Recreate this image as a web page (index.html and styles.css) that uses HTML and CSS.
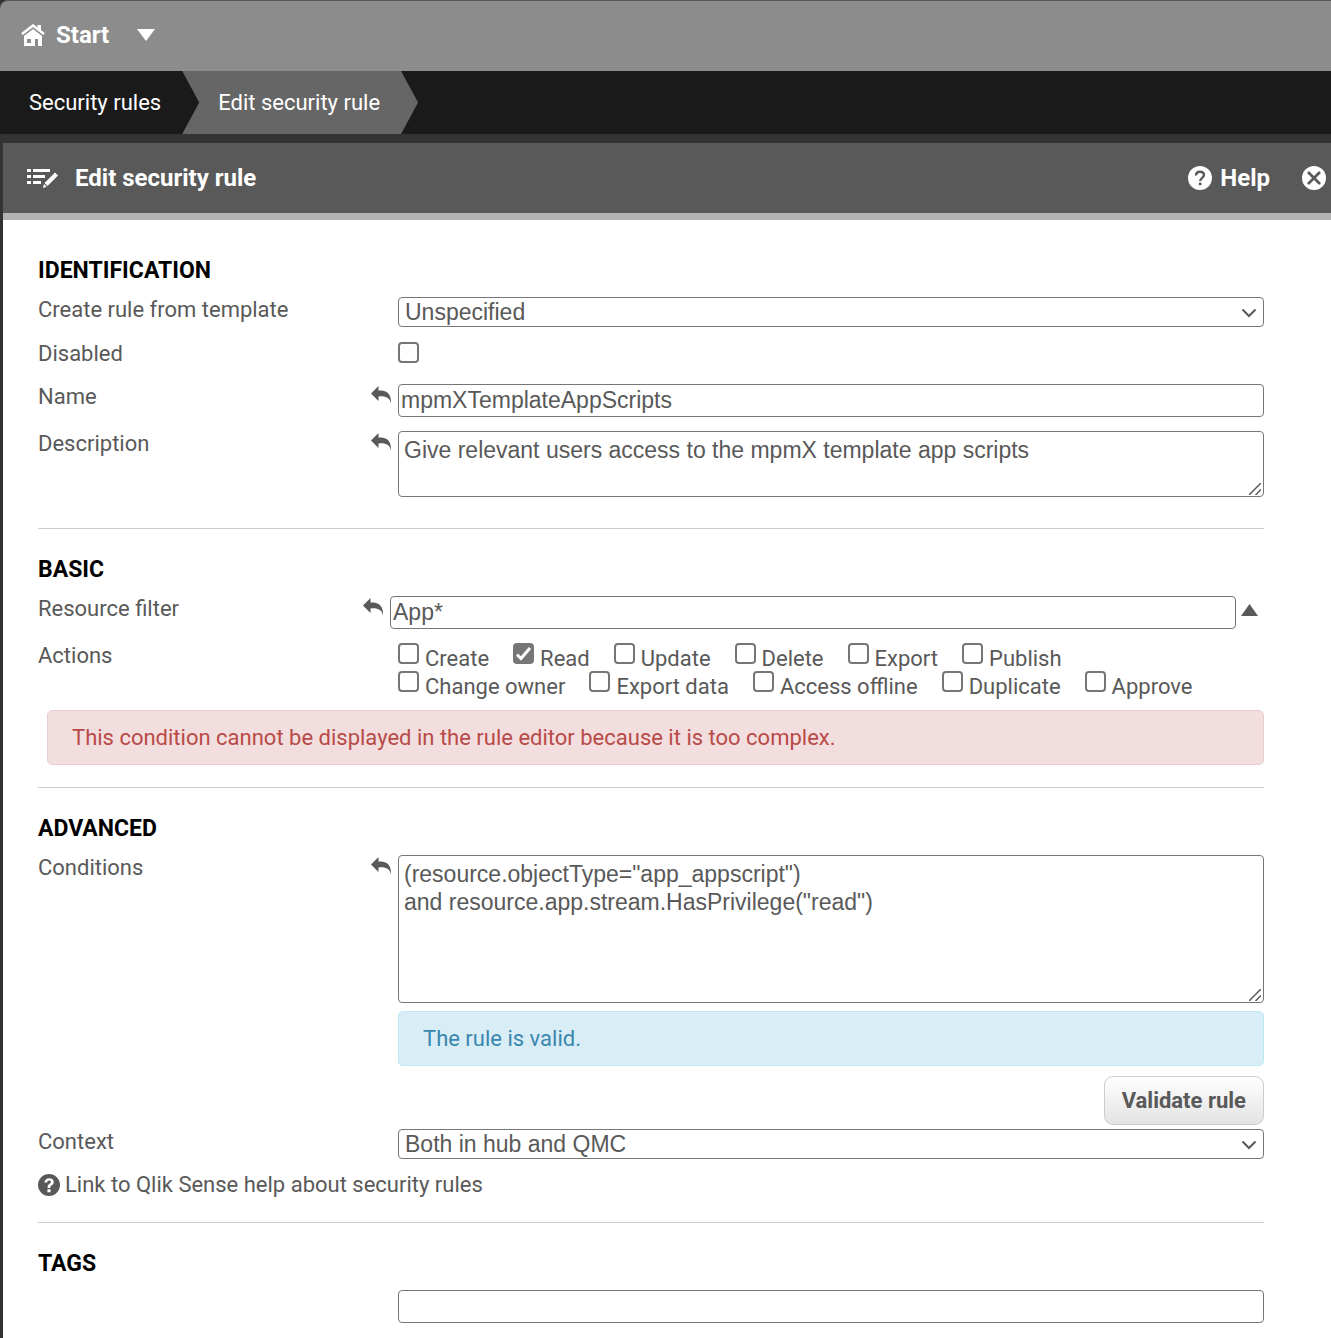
FILE: index.html
```html
<!DOCTYPE html>
<html lang="en">
<head>
  <meta charset="UTF-8">
  <meta name="viewport" content="width=device-width, initial-scale=1.0">
  <title>Edit security rule</title>
  <link rel="stylesheet" href="styles.css">
</head>
<body>
  <!-- shared icons -->
  <svg class="sprite" aria-hidden="true">
    <symbol id="undo" viewBox="0 0 20 18">
      <path d="M0 7.500 7.500 0v4.500C14 4.200 20.500 6 20 17.500 18.800 12 15 9.800 7.500 10.500V15z"/>
    </symbol>
    <symbol id="chevron" viewBox="0 0 16 10">
      <path d="M1.500 1.500 8 8l6.500-6.500" fill="none" stroke="currentColor" stroke-width="2"/>
    </symbol>
    <symbol id="grip" viewBox="0 0 12 12">
      <path d="M0 12 12 0M6.500 12 12 6.500" fill="none" stroke="currentColor" stroke-width="1.500"/>
    </symbol>
    <symbol id="help" viewBox="0 0 24 24">
      <path fill-rule="evenodd" d="M12 0a12 12 0 1 0 0 24 12 12 0 0 0 0-24zM7 9.300C7.200 6.300 9.200 4.500 12.200 4.500c3 0 5 1.700 5 4.100 0 1.700-.8 2.700-2.200 3.700-1.200.8-1.500 1.300-1.500 2.500v.4h-3v-.7c0-1.800.6-2.800 2-3.800 1.200-.8 1.500-1.200 1.500-2 0-1-.7-1.600-1.900-1.600-1.300 0-2 .8-2.100 2.200zM10.300 16.500h3.400v3.300h-3.400z"/>
    </symbol>
  </svg>

  <header class="topbar">
    <a class="start" href="#">
      <svg class="home-icon" viewBox="0 0 24 23" aria-hidden="true">
        <path d="M1 10 12 1.500 23 10" fill="none" stroke="#fff" stroke-width="2.500"/>
        <path d="M16.500 1H20v6.500l-3.500-3z" fill="#fff"/>
        <path fill="#fff" fill-rule="evenodd" d="M12 5 21 12v10H3V12zM6 15v4h4v-4zm8 0v7h3v-7z"/>
      </svg>
      <span>Start</span>
    </a>
    <button class="menu-btn" type="button" aria-label="Open menu">
      <svg viewBox="0 0 18 12" aria-hidden="true"><path d="M0 0h18L9 12z" fill="#fff"/></svg>
    </button>
  </header>

  <nav class="crumbs">
    <a class="crumb" href="#">Security rules</a>
    <a class="crumb active" href="#">Edit security rule</a>
  </nav>

  <main class="panel">
    <div class="panel-header">
      <svg class="edit-icon" viewBox="0 0 31 20" aria-hidden="true">
        <path fill="#fff" d="M0 1h4v3H0zM6 1h17v3H6zM0 7h4v3H0zM6 7h12v3H6zM0 13h4v3H0zM6 13h8v3H6zM28 4.500l3 3L20.500 18l-3-3zM17 16l2.700 2.700L16 20z"/>
      </svg>
      <h1>Edit security rule</h1>
      <a class="help" href="#">
        <svg viewBox="0 0 24 24" aria-hidden="true">
          <circle cx="12" cy="12" r="12" fill="#fff"/>
          <path d="M8 9.500C8 7 9.700 5.800 12 5.800s4 1.300 4 3.300c0 2.700-3.800 2.900-3.800 6" fill="none" stroke="#595959" stroke-width="2.400"/>
          <path d="M10.900 16.600h2.600v2.600h-2.600z" fill="#595959"/>
        </svg>
        Help
      </a>
      <button class="close" type="button" aria-label="Close">
        <svg viewBox="0 0 24 24" aria-hidden="true">
          <circle cx="12" cy="12" r="12" fill="#fff"/>
          <path d="m6 6 12 12m0-12L6 18" stroke="#595959" stroke-width="2.800"/>
        </svg>
      </button>
    </div>

    <form class="content">
      <section>
        <h2>IDENTIFICATION</h2>
        <div class="row">
          <label for="template">Create rule from template</label>
          <div class="field">
            <select id="template"><option>Unspecified</option></select>
            <svg class="chevron" aria-hidden="true"><use href="#chevron"/></svg>
          </div>
        </div>
        <div class="row">
          <label for="disabled">Disabled</label>
          <div class="field check-field"><input type="checkbox" id="disabled"></div>
        </div>
        <div class="row">
          <label for="name">Name</label>
          <button class="undo" type="button" aria-label="Undo name"><svg aria-hidden="true"><use href="#undo"/></svg></button>
          <div class="field"><input type="text" id="name" value="mpmXTemplateAppScripts"></div>
        </div>
        <div class="row">
          <label for="description">Description</label>
          <button class="undo" type="button" aria-label="Undo description"><svg aria-hidden="true"><use href="#undo"/></svg></button>
          <div class="field">
            <textarea id="description" rows="2">Give relevant users access to the mpmX template app scripts</textarea>
            <svg class="grip" aria-hidden="true"><use href="#grip"/></svg>
          </div>
        </div>
      </section>

      <section>
        <h2>BASIC</h2>
        <div class="row filter-row">
          <label for="filter">Resource filter</label>
          <button class="undo" type="button" aria-label="Undo resource filter"><svg aria-hidden="true"><use href="#undo"/></svg></button>
          <div class="field"><input type="text" id="filter" value="App*"></div>
          <button class="collapse" type="button" aria-label="Collapse">
            <svg viewBox="0 0 17 12" aria-hidden="true"><path d="M8.500 0 17 12H0z"/></svg>
          </button>
        </div>
        <div class="row actions-row">
          <span class="label">Actions</span>
          <div class="field">
            <div class="actions">
              <label><input type="checkbox">Create</label>
              <label><input type="checkbox" checked>Read</label>
              <label><input type="checkbox">Update</label>
              <label><input type="checkbox">Delete</label>
              <label><input type="checkbox">Export</label>
              <label><input type="checkbox">Publish</label>
            </div>
            <div class="actions">
              <label><input type="checkbox">Change owner</label>
              <label><input type="checkbox">Export data</label>
              <label><input type="checkbox">Access offline</label>
              <label><input type="checkbox">Duplicate</label>
              <label><input type="checkbox">Approve</label>
            </div>
          </div>
        </div>
        <p class="alert error">This condition cannot be displayed in the rule editor because it is too complex.</p>
      </section>

      <section>
        <h2>ADVANCED</h2>
        <div class="row conditions-row">
          <label for="conditions">Conditions</label>
          <button class="undo" type="button" aria-label="Undo conditions"><svg aria-hidden="true"><use href="#undo"/></svg></button>
          <div class="field">
            <textarea id="conditions" class="tall" rows="5">(resource.objectType="app_appscript")
and resource.app.stream.HasPrivilege("read")</textarea>
            <svg class="grip" aria-hidden="true"><use href="#grip"/></svg>
          </div>
        </div>
        <div class="validation">
          <p class="alert info">The rule is valid.</p>
          <button class="validate" type="button">Validate rule</button>
        </div>
        <div class="row">
          <label for="context">Context</label>
          <div class="field">
            <select id="context"><option>Both in hub and QMC</option></select>
            <svg class="chevron" aria-hidden="true"><use href="#chevron"/></svg>
          </div>
        </div>
        <a class="help-link" href="#"><svg aria-hidden="true"><use href="#help"/></svg>Link to Qlik Sense help about security rules</a>
      </section>

      <section>
        <h2>TAGS</h2>
        <div class="row">
          <span class="label"></span>
          <div class="field"><input type="text" id="tags" aria-label="Tags"></div>
        </div>
      </section>
    </form>
  </main>
</body>
</html>
```
FILE: styles.css
```css
* {
  box-sizing: border-box;
}

body {
  margin: 0;
  background: #333;
  color: #595959;
  font-family: Roboto, "Liberation Sans", sans-serif;
  font-size: 22px;
  line-height: 24px;
}

h1, h2, p {
  margin: 0;
}

a {
  color: inherit;
  text-decoration: none;
}

svg {
  display: block;
  fill: currentColor;
}

button {
  padding: 0;
  border: none;
  background: none;
  color: inherit;
  font: inherit;
  cursor: pointer;
}

.sprite {
  display: none;
}

/* top bars */
.topbar {
  display: flex;
  align-items: center;
  gap: 28px;
  height: 71px;
  padding: 0 21px 2px;
  background: #8c8c8c;
  border-top: 1px solid #57555c;
  border-top-left-radius: 8px;
  color: #fff;
}

.start {
  display: flex;
  align-items: center;
  gap: 11px;
  font-size: 24px;
  font-weight: bold;
}

.home-icon {
  width: 24px;
  height: 23px;
}

.menu-btn svg {
  width: 18px;
  height: 12px;
}

.crumbs {
  display: flex;
  height: 63px;
  background: #1a1a1a;
  color: #fff;
}

.crumb {
  display: flex;
  align-items: center;
  padding: 0 38px 0 29px;
}

.crumb.active {
  margin-left: -17px;
  padding-left: 36px;
  background: #666;
  clip-path: polygon(0 0, calc(100% - 17px) 0, 100% 50%, calc(100% - 17px) 100%, 0 100%, 17px 50%);
}

.panel {
  margin: 9px 0 0 3px;
  background: #fff;
}

.panel-header {
  display: flex;
  align-items: center;
  height: 77px;
  padding: 0 5px 0 24px;
  background: #595959;
  border-bottom: 7px solid #b3b3b3;
  color: #fff;
}

.panel-header h1 {
  flex: 1;
  font-size: 24px;
}

.edit-icon {
  width: 31px;
  height: 20px;
  margin-right: 17px;
}

.help {
  display: flex;
  align-items: center;
  gap: 8px;
  font-size: 24px;
  font-weight: bold;
}

.help svg,
.close svg {
  width: 24px;
  height: 24px;
}

.close {
  margin-left: 32px;
}

/* form */
.content {
  padding: 36px 67px 1px 35px;
}

section + section {
  padding-top: 26px;
  border-top: 1px solid #ccc;
}

section {
  padding-bottom: 17px;
}

h2 {
  margin-bottom: 11px;
  color: #000;
  font-size: 23px;
  line-height: 30px;
}

.row {
  display: flex;
  align-items: flex-start;
  padding-bottom: 14px;
}

.row > label,
.row > .label {
  flex: none;
  width: 360px;
  line-height: 26px;
}

.field {
  position: relative;
  flex: 1;
}

.undo {
  width: 20px;
  margin: 2px 7px 0 -27px;
}

.undo svg {
  width: 20px;
  height: 18px;
}

input[type="text"],
select,
textarea {
  display: block;
  width: 100%;
  border: 1px solid #767676;
  border-radius: 4px;
  background: #fff;
  color: #595959;
  font-family: "Liberation Sans", Arial, sans-serif;
  font-size: 23px;
}

input[type="text"] {
  height: 33px;
  padding: 0 2px;
}

select {
  height: 30px;
  padding: 0 6px;
  appearance: none;
}

textarea {
  padding: 4px 5px;
  line-height: 28px;
  resize: none;
}

textarea.tall {
  height: 148px;
}

.chevron {
  position: absolute;
  top: 11px;
  right: 7px;
  width: 16px;
  height: 10px;
  pointer-events: none;
}

.grip {
  position: absolute;
  right: 3px;
  bottom: 2px;
  width: 12px;
  height: 12px;
}

input[type="checkbox"] {
  display: block;
  flex: none;
  width: 21px;
  height: 21px;
  margin: 0;
  border: 2px solid #767676;
  border-radius: 4px;
  background: #fff;
  appearance: none;
}

input[type="checkbox"]:checked {
  background: #767676 url("data:image/svg+xml,%3Csvg xmlns='http://www.w3.org/2000/svg' viewBox='0 0 17 17'%3E%3Cpath d='M2 9.500 6 13.500 15 3' fill='none' stroke='%23fff' stroke-width='3'/%3E%3C/svg%3E") center / 17px no-repeat;
}

.check-field {
  padding: 1px 0 7px;
}

.filter-row .undo {
  margin-left: -35px;
}

.collapse {
  width: 28px;
  padding: 8px 5px;
}

.collapse svg {
  width: 17px;
  height: 12px;
}

.actions-row {
  padding-bottom: 11px;
}

.actions {
  display: flex;
  gap: 24px;
}

.actions label {
  display: flex;
  gap: 6px;
  height: 28px;
  line-height: 32px;
}

.alert {
  padding: 14px 24px;
  border: 1px solid #ebccd1;
  border-radius: 5px;
  line-height: 25px;
}

.error {
  margin: 0 0 5px 9px;
  background: #f2dede;
  color: #b94a48;
}

.conditions-row {
  padding-bottom: 8px;
}

.validation {
  display: flex;
  flex-direction: column;
  gap: 10px;
  margin: 0 0 4px 360px;
}

.info {
  background: #d9edf7;
  border-color: #bce8f1;
  color: #3a87ad;
}

.validate {
  align-self: flex-end;
  height: 49px;
  padding: 0 17px;
  border: 1px solid #ccc;
  border-radius: 9px;
  background: linear-gradient(#fff, #e3e3e3);
  font-weight: bold;
}

.help-link {
  display: flex;
  align-items: center;
  gap: 5px;
  margin-bottom: 8px;
}

.help-link svg {
  width: 22px;
  height: 22px;
}
```
